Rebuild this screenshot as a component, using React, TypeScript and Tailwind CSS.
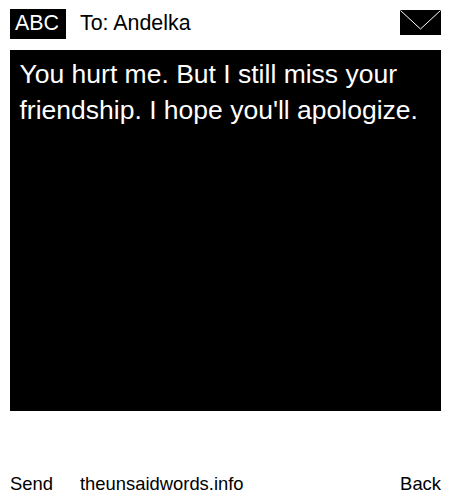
const Envelope = () => (
  <svg width="41" height="25" viewBox="0 0 41 25" className="block">
    <rect width="41" height="25" fill="#000" />
    <path d="M0.5 0.5 L20.5 19 L40.5 0.5" fill="none" stroke="#fff" strokeWidth="1" />
  </svg>
)

const App = () => {
  return (
    <div className="w-[450px] h-[500px] flex flex-col bg-white text-black font-['Liberation_Sans',Arial,sans-serif] overflow-hidden">
      <header className="flex items-start pl-2.5 pr-[9px] pt-[9px] h-[50px]">
        <div className="w-14 h-[30px] bg-black text-white text-[21.4px] leading-[28px] text-center pr-0.5">ABC</div>
        <div className="ml-3.5 text-[21.4px] leading-[28px]">To: Andelka</div>
        <div className="ml-auto pt-px">
          <Envelope />
        </div>
      </header>

      <main className="ml-2.5 w-[431px] h-[361px] bg-black text-white text-[26.5px] leading-9 pl-[9.5px] pr-2 pt-1.5">
        You hurt me. But I still miss your friendship. I hope you'll apologize.
      </main>

      <footer className="flex items-center pl-2.5 pr-[9px] mt-[61px] text-[18.4px] leading-6">
        <span className="w-[70px]">Send</span>
        <span>theunsaidwords.info</span>
        <span className="ml-auto">Back</span>
      </footer>
    </div>
  )
}

export default App
